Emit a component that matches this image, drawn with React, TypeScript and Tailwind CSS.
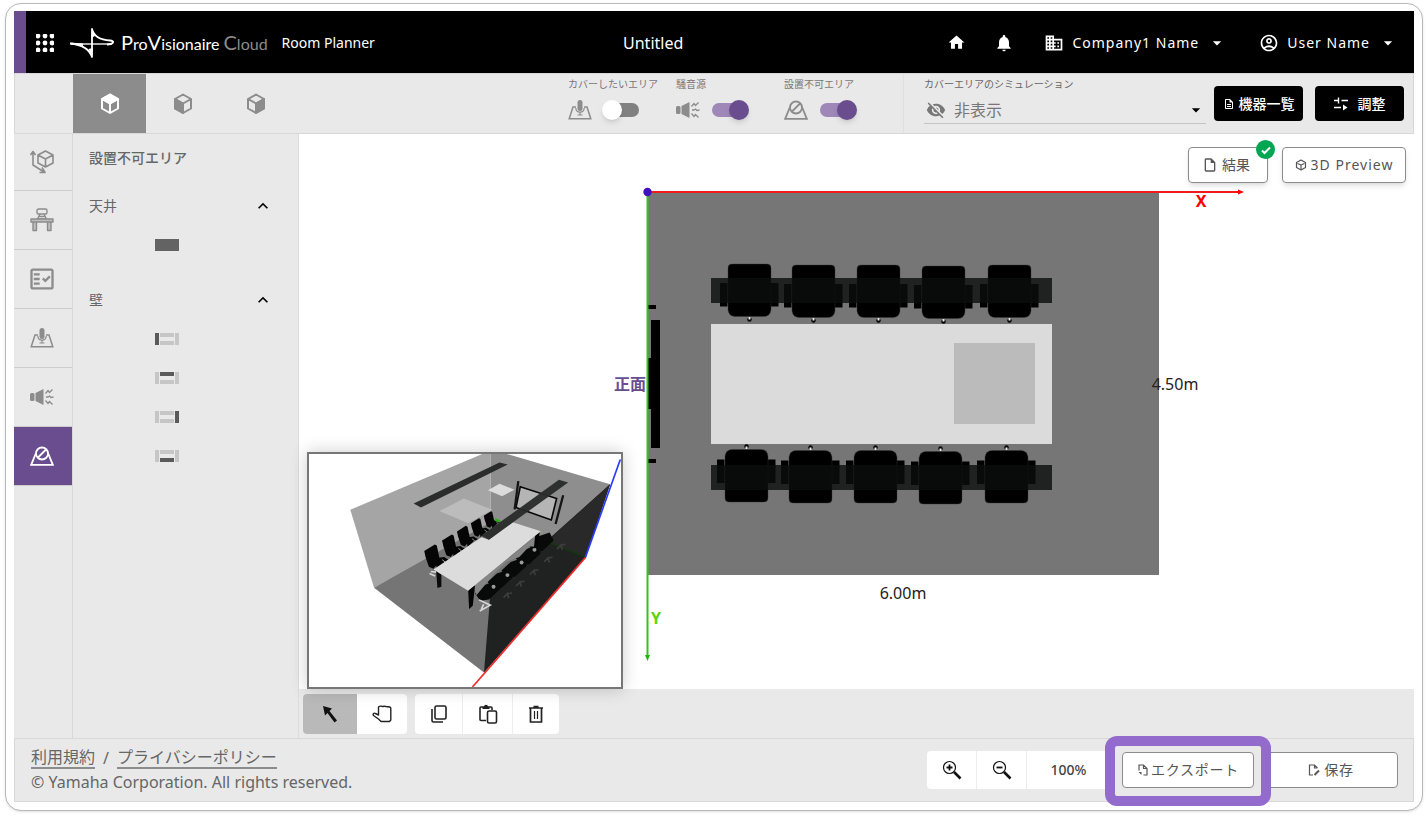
import React, { useState } from 'react';
import {
  MdArrowDropDown,
  MdDomain,
  MdExpandLess,
  MdHome,
  MdNotifications,
  MdOutlineAccountCircle,
  MdOutlineDescription,
  MdOutlineFactCheck,
  MdOutlineInsertDriveFile,
  MdVisibilityOff,
} from 'react-icons/md';

type IconProps = { className?: string };

const AppsIcon = () => (
  <svg viewBox="0 0 18 18" className="h-[18px] w-[18px]" fill="currentColor">
    {[2, 9, 16].map((y) => [2, 9, 16].map((x) => <circle key={`${x}-${y}`} cx={x} cy={y} r="2.4" />))}
  </svg>
);

const LogoMark = () => (
  <svg viewBox="0 0 46 32" className="h-8 w-[46px]" fill="none">
    <path d="M2 17 H43" stroke="#aaa" strokeWidth="2" />
    <path d="M1 16.500 C12 17.500 20 21 23 30 V2 C25 10 32 13 41 13.500 C46 14 45 17 38 17.500" stroke="#fff" strokeWidth="1.800" strokeLinejoin="round" />
    <path d="M23 2 L22.300 11 L26 9 Z M23 30 L23.700 21 L19.500 22 Z M1 15.500 L14 16.500 L14 19 Z" fill="#fff" />
  </svg>
);

// face: which side of the cube is filled
const CubeIcon = ({ face }: { face: 'top' | 'left' | 'right' }) => (
  <svg viewBox="0 0 20 22" className="h-[22px] w-5" stroke="currentColor" strokeWidth="2" strokeLinejoin="round" fill="none">
    <path d="M10 1.500 L18 6 V15.500 L10 20 L2 15.500 V6 Z M2 6 L10 10.500 L18 6 M10 10.500 V20" />
    {face === 'top' && <path d="M10 1.500 L18 6 L10 10.500 L2 6 Z" fill="currentColor" />}
    {face === 'left' && <path d="M2 6 L10 10.500 V20 L2 15.500 Z" fill="currentColor" />}
    {face === 'right' && <path d="M18 6 L10 10.500 V20 L18 15.500 Z" fill="currentColor" />}
  </svg>
);

const MicAreaIcon = ({ className }: IconProps) => (
  <svg viewBox="0 0 24 20" className={className} fill="none" stroke="currentColor" strokeWidth="1.500">
    <path d="M8 7 H5 L1.200 18.800 H22.800 L19 7 H16" />
    <rect x="9.500" y="0" width="5" height="11" rx="2.500" fill="currentColor" stroke="none" />
    <path d="M7.800 8 C8 13.500 16 13.500 16.200 8 M12 11.500 V15 M9.500 15 H14.500" strokeWidth="1.200" />
  </svg>
);

const NoiseIcon = ({ className }: IconProps) => (
  <svg viewBox="0 0 24 20" className={className} fill="currentColor">
    <rect x="0" y="6" width="4.500" height="8" rx="1.500" />
    <path d="M5.500 6 L13.500 2 V18 L5.500 14 Z" />
    <path d="M15.500 6.500 L18 3.500 L19.500 5.500 L22.500 2.500 M16 10 H18 L19.500 9 L21 10.500 L23.500 10 M15.500 13.500 L18 16.500 L19.500 14.500 L22.500 17.500" fill="none" stroke="currentColor" strokeWidth="1.300" />
  </svg>
);

const NoPlaceIcon = ({ className }: IconProps) => (
  <svg viewBox="0 0 24 20" className={className} fill="none" stroke="currentColor" strokeWidth="1.800">
    <path d="M6 7 L1.200 18.800 H22.800 L18 7" />
    <circle cx="12" cy="7.500" r="6" />
    <path d="M8 11.500 L16 3.500" />
  </svg>
);

const RoomSizeIcon = () => (
  <svg viewBox="0 0 24 24" className="h-6 w-6" fill="none" stroke="currentColor" strokeWidth="1.600" strokeLinejoin="round">
    <path d="M15.500 1 L23 5 V13 L15.500 17 L8 13 V5 Z M8 5 L15.500 9 L23 5 M15.500 9 V17" />
    <path d="M3 2 V15 L14 22 M0.500 5 L3 1.500 L5.500 5 M12 17.500 L15 22.500 L9.500 22.500" />
  </svg>
);

const DeskIcon = () => (
  <svg viewBox="0 0 24 24" className="h-6 w-6" fill="none" stroke="currentColor" strokeWidth="1.400" strokeLinejoin="round">
    <rect x="7" y="1" width="10" height="5" rx="1.500" />
    <path d="M10 6 L7.500 11 H16.500 L14 6 M9 8.500 H15" />
    <path d="M1 11 H23 V14 H1 Z M3 14 V22.500 H6.500 V14 M17.500 14 V22.500 H21 V14" fill="#bdbdbd" />
  </svg>
);

const TuneIcon = () => (
  <svg viewBox="0 0 14 14" className="h-3.5 w-3.5" fill="none" stroke="currentColor" strokeWidth="1.400">
    <path d="M0 3.500 H5 M4.500 0.500 V6.500 M7.500 3.500 H14 M0 10.500 H7" />
    <path d="M9 7.500 L13.500 10.500 L9 13.500 Z" fill="currentColor" stroke="none" />
  </svg>
);

const BoxIcon = () => (
  <svg viewBox="0 0 12 12" className="h-3 w-3" fill="none" stroke="currentColor" strokeWidth="1.200" strokeLinejoin="round">
    <path d="M6 1 L10.500 3.500 V8.500 L6 11 L1.500 8.500 V3.500 Z M2.500 4.500 L6 6 L9.500 4.500 M6 6 V10" />
  </svg>
);

const DoneIcon = () => (
  <svg viewBox="0 0 12 12" className="h-3 w-3" fill="none" stroke="currentColor" strokeWidth="2">
    <path d="M2 6.500 L4.500 9 L10 3.500" />
  </svg>
);

const CursorIcon = () => (
  <svg viewBox="0 0 18 20" className="h-5 w-[18px]">
    <path d="M2 2 L11 4.500 L8.500 7 L16 16.500 L13.500 18.500 L6.500 9 L4 11.500 Z" fill="#111" />
  </svg>
);

const HandIcon = () => (
  <svg viewBox="0 0 20 20" className="h-5 w-5" fill="none" stroke="#222" strokeWidth="1.400" strokeLinejoin="round">
    <path d="M6.500 3 C8 1.500 9.500 2 11 2.500 C12.500 1.800 14 2.500 15 2.800 C17 2.500 18.800 3 18.800 4.500 V16 L17.500 17.500 H9 L6.500 15 L1.500 11.500 C0.500 10 2 8.500 3.500 9.500 L6.500 11 Z" />
  </svg>
);

const CopyIcon = () => (
  <svg viewBox="0 0 20 20" className="h-5 w-5" fill="none" stroke="#222" strokeWidth="1.600">
    <rect x="6" y="2" width="11" height="13" rx="1.500" />
    <path d="M3 5 V16.500 Q3 18 4.500 18 H14" />
  </svg>
);

const PasteIcon = () => (
  <svg viewBox="0 0 20 20" className="h-5 w-5" fill="none" stroke="#222" strokeWidth="1.600">
    <path d="M8 16.500 H3 Q2 16.500 2 15.500 V4 Q2 3 3 3 H13 Q14 3 14 4 V6" />
    <rect x="9.500" y="7" width="9" height="12" rx="1.500" />
    <path d="M4.500 5 V3 H6 C6 0 10 0 10 3 H11.500 V5 Z" fill="#222" stroke="none" />
  </svg>
);

const TrashIcon = () => (
  <svg viewBox="0 0 20 20" className="h-5 w-5" fill="none" stroke="#222" strokeWidth="1.700">
    <path d="M3 4 H17 M7.500 2.500 H12.500 M4.500 4 V18 H15.500 V4" />
    <path d="M8.500 7 V15 M11.500 7 V15" strokeWidth="1.200" />
  </svg>
);

const ZoomIcon = ({ plus }: { plus?: boolean }) => (
  <svg viewBox="0 0 20 20" className="h-5 w-5" fill="none" stroke="#111">
    <circle cx="7.500" cy="7.500" r="6" strokeWidth="1.200" />
    <path d={plus ? 'M4.500 7.500 H10.500 M7.500 4.500 V10.500' : 'M4.500 7.500 H10.500'} strokeWidth="1.800" />
    <path d="M12 12 L18.500 18.500" strokeWidth="2.600" />
  </svg>
);

const ExportIcon = () => (
  <svg viewBox="0 0 12 12" className="h-3 w-3" fill="none" stroke="currentColor" strokeWidth="1.200">
    <path d="M2 6.500 V1 H6.500 L10 4.500 V11 H6.500 M6.500 1 V4.500 H10" />
    <path d="M1.500 8 H4.500 V11 Z" fill="currentColor" stroke="none" />
  </svg>
);

const SaveIcon = () => (
  <svg viewBox="0 0 12 12" className="h-3 w-3" fill="none" stroke="currentColor" strokeWidth="1.200">
    <path d="M5 11 H1.500 V1 H6.500 L9.500 4 M6.500 1 V4 H9.500" />
    <path d="M6.500 11 L11 6.500" strokeWidth="2" />
  </svg>
);

const Header = () => (
  <header className="flex h-[62px] items-center border-l-12 border-[#6a4d8f] bg-black pt-px pr-4 text-sm text-white">
    <button aria-label="Apps" className="ml-2.5 mr-[15px]"><AppsIcon /></button>
    <LogoMark />
    <div className="ml-1.5 flex items-baseline font-['Lato',sans-serif] text-base leading-6">
      <span className="text-xl leading-6">P</span>ro<span className="text-xl leading-6">V</span>isionaire
      <span className="ml-1 text-[#8c8c8c]"><span className="text-xl leading-6">C</span>loud</span>
    </div>
    <span className="ml-3.5">Room Planner</span>
    <h1 className="flex-1 pr-4 text-center text-base">Untitled</h1>
    <nav className="flex items-center">
      <button aria-label="Home" className="mr-7"><MdHome className="h-[19px] w-[19px]" /></button>
      <button aria-label="Notifications" className="mr-[30px]"><MdNotifications className="h-5 w-5" /></button>
      <button className="mr-8 flex items-center tracking-[1px]">
        <MdDomain className="mr-2 h-5 w-5" />Company1 Name<MdArrowDropDown className="ml-2 h-5 w-5" />
      </button>
      <button className="flex items-center tracking-[1px]">
        <MdOutlineAccountCircle className="mr-2 h-5 w-5" />User Name<MdArrowDropDown className="ml-2 h-5 w-5" />
      </button>
    </nav>
  </header>
);

const areaToggles = [
  { label: 'カバーしたいエリア', Icon: MicAreaIcon, on: false },
  { label: '騒音源', Icon: NoiseIcon, on: true },
  { label: '設置不可エリア', Icon: NoPlaceIcon, on: true },
];

const Toolbar = () => (
  <div className="flex h-[61px] border border-[#d8d8d8] bg-[#e9e9e9] pl-[58px]">
    {(['top', 'left', 'right'] as const).map((face) => (
      <button
        key={face}
        aria-label={`View ${face}`}
        className={`flex w-[73px] items-center justify-center ${face === 'top' ? 'bg-[#8c8c8c] text-white' : 'text-[#8c8c8c]'}`}
      >
        <CubeIcon face={face} />
      </button>
    ))}
    <div className="ml-auto flex border-r border-[#dfdfdf] pr-[11px]">
      {areaToggles.map(({ label, Icon, on }) => (
        <label key={label} className="flex w-27 flex-col whitespace-nowrap pt-0.5 text-[10px] leading-4 text-[#777]">
          {label}
          <span className="mt-2 flex items-center">
            <Icon className="mr-3 h-5 w-6 text-[#8c8c8c]" />
            <input type="checkbox" defaultChecked={on} className="peer sr-only" />
            <span className="flex h-3.5 w-[35px] items-center rounded-full bg-[#808080] peer-checked:justify-end peer-checked:bg-[#9f87b8] peer-checked:[&>i]:bg-[#6a4d8f]">
              <i className="-mx-0.5 h-5 w-5 rounded-full bg-white shadow-md" />
            </span>
          </span>
        </label>
      ))}
    </div>
    <div className="flex w-[310px] flex-col pl-5 pr-2 pt-0.5">
      <label htmlFor="simulation" className="text-[10px] leading-4 text-[#666]">カバーエリアのシミュレーション</label>
      <div className="mt-1 flex h-7 items-center border-b border-[#c4c4c4] text-[#777]">
        <MdVisibilityOff className="ml-0.5 h-5 w-5" />
        <select id="simulation" className="h-7 flex-1 appearance-none bg-transparent pl-2 text-base leading-7">
          <option>非表示</option>
        </select>
        <MdArrowDropDown className="-ml-5 h-5 w-5 text-black" />
      </div>
    </div>
    <div className="flex gap-3 pr-[9px] pt-3 text-sm font-medium text-white">
      <button className="flex h-[35px] w-[89px] items-center justify-center gap-1 rounded bg-black">
        <MdOutlineDescription className="h-3 w-3" />機器一覧
      </button>
      <button className="flex h-[35px] w-[89px] items-center justify-center gap-2.5 rounded bg-black">
        <TuneIcon />調整
      </button>
    </div>
  </div>
);

const railItems = [
  { label: 'Room size', icon: <RoomSizeIcon /> },
  { label: 'Furniture', icon: <DeskIcon /> },
  { label: 'Requirements', icon: <MdOutlineFactCheck className="h-7 w-7" /> },
  { label: 'Cover area', icon: <MicAreaIcon className="h-5 w-6" /> },
  { label: 'Noise source', icon: <NoiseIcon className="h-5 w-6" /> },
  { label: 'Restricted area', icon: <NoPlaceIcon className="h-5 w-6" /> },
];

const Rail = () => (
  <nav className="w-[59px] border-r border-[#d8d8d8]">
    {railItems.map((item, i) => (
      <button
        key={item.label}
        aria-label={item.label}
        className={`flex w-full items-center justify-center border-b border-[#cdcdcd] pr-0.5 ${
          i === 0 ? 'h-[57px]' : 'h-[59px]'
        } ${i === 5 ? 'bg-[#6a4d8f] text-white' : 'text-[#8c8c8c]'}`}
      >
        {item.icon}
      </button>
    ))}
  </nav>
);

const WallIcon = ({ side }: { side: string }) => {
  const fill = (s: string) => (s === side ? '#5a5a5a' : '#c6c6c6');
  return (
    <svg viewBox="0 0 24 12" className="h-3 w-6">
      <rect x="0" y="0" width="4" height="12" fill={fill('left')} />
      <rect x="5" y="0" width="14" height="4" fill={fill('top')} />
      <rect x="20" y="0" width="4" height="12" fill={fill('right')} />
      <rect x="5" y="8" width="14" height="4" fill={fill('bottom')} />
    </svg>
  );
};

const Section = ({ title, children }: { title: string; children: React.ReactNode }) => {
  const [open, setOpen] = useState(true);
  return (
    <section className="pb-4">
      <button onClick={() => setOpen(!open)} className="flex h-[39px] w-full items-center justify-between">
        {title}
        <MdExpandLess className={`h-5 w-5 text-black ${open ? '' : 'rotate-180'}`} />
      </button>
      {open && <div className="flex flex-col items-center pr-7">{children}</div>}
    </section>
  );
};

const Panel = () => (
  <aside className="w-[226px] border-r border-[#dcdcdc] pl-4 pr-[25px] pt-3 text-sm text-[#666]">
    <h2 className="mb-4 leading-6 font-medium">設置不可エリア</h2>
    <Section title="天井">
      <button aria-label="Ceiling" className="flex h-[39px] items-center"><span className="h-3 w-6 bg-[#636363]" /></button>
    </Section>
    <Section title="壁">
      {['left', 'top', 'right', 'bottom'].map((side) => (
        <button key={side} aria-label={`Wall ${side}`} className="flex h-[39px] items-center"><WallIcon side={side} /></button>
      ))}
    </Section>
  </aside>
);

const topChairs = [[749, 264], [813, 265], [878, 265], [943, 266], [1009, 265]];
const bottomChairs = [[746, 449], [810, 450], [875, 450], [940, 451], [1006, 450]];

const Chair = ({ x, y, flip }: { x: number; y: number; flip?: boolean }) => (
  <g transform={flip ? `translate(${x} ${y + 53}) scale(1 -1)` : `translate(${x} ${y})`}>
    <rect x="-29" y="19" width="7.500" height="23.500" />
    <rect x="22" y="19" width="7.500" height="23.500" />
    <path d="M-17 0 H18 Q22 0 22 4 V46 Q21 52.500 15 52.500 H-14 Q-20 52.500 -21 46 V4 Q-21 0 -17 0 Z" stroke="#3a3a3a" strokeWidth="0.400" />
    <circle cx="0.500" cy="55.500" r="2.200" />
    <rect x="-0.500" y="53" width="2" height="2.500" fill="#eee" />
  </g>
);

const FloorPlan = () => (
  <svg viewBox="299 134 1115 555" className="block h-auto w-full text-base" fill="#000">
    <rect x="648" y="192" width="511" height="383" fill="#767676" />
    <rect x="648" y="305" width="8" height="4" />
    <rect x="648" y="459" width="8" height="4" />
    <rect x="651" y="320" width="9" height="128" />
    <rect x="647" y="358" width="6" height="51" />
    {topChairs.map(([x, y]) => <Chair key={x} x={x} y={y} />)}
    {bottomChairs.map(([x, y]) => <Chair key={x} x={x} y={y} flip />)}
    <g fill="#0b0e0d" opacity="0.800">
      <rect x="711" y="278" width="341" height="25" />
      <rect x="711" y="465" width="341" height="25" />
    </g>
    <rect x="711" y="324" width="341" height="120" fill="#dbdbdb" />
    <rect x="954" y="343" width="81" height="81" fill="#bbb" />
    <path d="M648 192 H1238" stroke="#ee1c1c" strokeWidth="1.800" />
    <path d="M1238 189.500 L1244 192 L1238 194.500 Z" fill="#f00" />
    <path d="M647.500 192 V656" stroke="#36c21e" strokeWidth="2" />
    <path d="M645 655 L647.500 661 L650 655 Z" fill="#1fb50f" />
    <circle cx="647.500" cy="192" r="4.200" fill="#3f0fc4" />
    <text x="1201" y="207" textAnchor="middle" className="font-bold" fill="#f00">X</text>
    <text x="656" y="624" textAnchor="middle" className="font-bold" fill="#5bd60d">Y</text>
    <text x="614" y="390" className="font-bold" fill="#6a4d8f">正面</text>
    <text x="1175" y="390" textAnchor="middle" fill="#222">4.50m</text>
    <text x="903" y="599" textAnchor="middle" fill="#222">6.00m</text>
  </svg>
);

const farChairs = [[398, 348], [450, 315], [493, 286], [533, 260], [570, 236]];
const nearChairs = [[560, 465], [598, 430], [640, 395], [683, 357], [722, 318]];

const RoomPreview = () => (
  <svg viewBox="24 38 943 706" className="block h-full w-full">
    <path d="M148 207 L548 38 H573 V262 L220 443 Z" fill="#a5a5a5" />
    <path d="M573 38 H622 L935 130 L860 352 L573 245 Z" fill="#8e8e8e" />
    <path d="M220 443 L573 245 L860 352 L553 700 Z" fill="#757575" />
    <path d="M418 211 L492 173 L578 207 L505 248 Z" fill="#bcbcbc" />
    <path d="M565 148 L600 128 L645 146 L608 166 Z" fill="#dcdcdc" />
    <path d="M340 188 L600 64 L625 70 L362 200 Z" fill="#2b2d2c" />
    <path d="M663 137 L773 173 L757 238 L650 200 Z" fill="#b5b5b5" stroke="#080808" strokeWidth="5" />
    <path d="M657 120 L646 206 M793 163 L770 250" stroke="#151515" strokeWidth="7" />
    <path d="M935 130 L750 295 L572 440 L570 490 L553 700 L860 352 Z" fill="#202221" />
    <path d="M935 130 L770 278 L752 308 L860 352 Z" fill="#292929" />
    <path d="M718 288 L742 300" stroke="#37c520" strokeWidth="8" />
    <path d="M745 304 L860 350" stroke="#12380e" strokeWidth="4" />
    {farChairs.map(([x, y], i) => {
      const s = 1 - i * 0.08;
      return (
        <g key={x} transform={`translate(${x} ${y}) scale(${s})`}>
          <path d="M-26 -16 L6 -36 L12 -33 L22 14 L2 38 L-12 32 L-22 2 Z M8 6 L34 2 L50 12 L36 18 L12 40 Z" fill="#050505" />
          <path d="M28 10 L38 18" stroke="#aaa" strokeWidth="3" />
        </g>
      );
    })}
    <path d="M586 236 L602 243" stroke="#2fae1b" strokeWidth="8" />
    <path d="M388 400 L405 408 M392 394 L410 396" stroke="#d5d5d5" strokeWidth="5" />
    <path d="M408 392 L424 404 V440 L412 444 Z" fill="#0a0a0a" />
    {nearChairs.map(([x, y], i) => (
      <g key={x}>
        <path d={`M${x - 34} ${y - 4} L${x - 6} ${y - 30} L${x + 30} ${y - 42} L${x + 42} ${y - 18} L${x + 8} ${y + 14} L${x - 18} ${y + 18} Z`} fill="#080909" />
        <path d={`M${x + 52} ${y + 8} l12 -12 l4 14 M${x + 64} ${y - 4} l14 -2`} stroke="#3c3e3d" strokeWidth="5" fill="none" />
        {i > 0 && <circle cx={x - 16} cy={y + 10} r="6" fill="#9b9b9b" />}
      </g>
    ))}
    <path d="M522 438 L718 282 L708 318 L690 318 L660 350 L620 365 L585 400 L530 466 Z" fill="#858585" />
    <path d="M708 285 L722 275 L716 315 L704 325 Z" fill="#050505" />
    <path d="M505 448 L526 436 L519 498 L508 508 Z" fill="#050505" />
    <path d="M538 480 L572 496 L540 514 M552 494 L545 508" stroke="#d8d8d8" strokeWidth="5" fill="none" />
    <path d="M400 388 L545 290 L568 298 L640 245 L725 272 L505 452 Z" fill="#dcdcdc" />
    <path d="M780 116 L808 124 L568 298 L545 286 Z" fill="#292b2a" opacity="0.950" />
    <path d="M860 352 L518 744" stroke="#f02a2a" strokeWidth="5" />
    <path d="M966 55 L860 352" stroke="#2a39ff" strokeWidth="5" />
  </svg>
);

const outlined = 'flex items-center justify-center rounded border border-[#8c8c8c] bg-white text-sm text-[#555]';

const Canvas = () => (
  <div className="relative bg-white">
    <FloorPlan />
    <div className="absolute top-[13px] right-2 flex gap-3.5 text-sm">
      <button className={`${outlined} relative h-9 w-20 gap-1 pr-1 shadow-md`}>
        <MdOutlineInsertDriveFile className="h-4 w-4" />結果
        <span className="absolute -top-2 -right-2 flex h-[19px] w-[19px] items-center justify-center rounded-full bg-[#00a651] text-white">
          <DoneIcon />
        </span>
      </button>
      <button className={`${outlined} h-9 w-[124px] gap-1 tracking-[1px] shadow-md`}>
        <BoxIcon />3D Preview
      </button>
    </div>
    <div className="absolute bottom-0 left-2 h-[237px] w-[316px] border-2 border-[#777] bg-white shadow-[0_0_16px_rgba(0,0,0,0.2)]">
      <RoomPreview />
    </div>
  </div>
);

const EditBar = () => (
  <div className="flex h-[49px] items-center gap-2 pl-1">
    <div className="flex h-10 overflow-hidden rounded bg-white">
      <button aria-label="Select" className="flex w-[54px] items-center justify-center bg-[#b9b9b9]"><CursorIcon /></button>
      <button aria-label="Pan" className="flex w-[50px] items-center justify-center"><HandIcon /></button>
    </div>
    <div className="flex h-10 divide-x divide-[#ededed] rounded bg-white">
      <button aria-label="Copy" className="flex w-[48px] items-center justify-center"><CopyIcon /></button>
      <button aria-label="Paste" className="flex w-[50px] items-center justify-center"><PasteIcon /></button>
      <button aria-label="Delete" className="flex w-[46px] items-center justify-center"><TrashIcon /></button>
    </div>
  </div>
);

const Footer = () => (
  <footer className="flex h-16 items-center border border-[#d8d8d8] bg-[#e9e9e9] pl-4 pr-[15px] text-[#666]">
    <div className="text-base leading-6">
      <div className="flex items-center">
        <a href="#terms" className="border-b-2 border-[#8c8c8c] leading-5">利用規約</a>
        <span className="mx-2">/</span>
        <a href="#privacy" className="border-b-2 border-[#8c8c8c] leading-5">プライバシーポリシー</a>
      </div>
      <p>© Yamaha Corporation. All rights reserved.</p>
    </div>
    <div className="ml-auto flex h-[38px] divide-x divide-[#ededed] rounded-l bg-white">
      <button aria-label="Zoom in" className="flex w-[50px] items-center justify-center"><ZoomIcon plus /></button>
      <button aria-label="Zoom out" className="flex w-[50px] items-center justify-center"><ZoomIcon /></button>
      <span className="flex w-[83px] items-center justify-center text-sm font-medium text-[#444]">100%</span>
    </div>
    <div className="relative ml-3">
      <button className={`${outlined} h-9 w-[132px] gap-0.5 tracking-wider`}><ExportIcon />エクスポート</button>
      <div className="pointer-events-none absolute -inset-x-[17px] -top-4 -bottom-[18px] z-10 rounded-xl border-10 border-[#926bcd]" />
    </div>
    <button className={`${outlined} ml-2.5 h-9 w-[134px] gap-1 tracking-wider`}><SaveIcon />保存</button>
  </footer>
);

const App: React.FC = () => (
  <div className="min-h-screen bg-white px-[5px] pt-[3px] pb-1.5 font-['Noto_Sans','Noto_Sans_CJK_JP',sans-serif]">
    <div className="rounded-2xl border border-[#b9b9b9] bg-white px-2 pt-[7px] pb-2 shadow-sm">
      <Header />
      <Toolbar />
      <main className="flex bg-[#e9e9e9]">
        <Rail />
        <Panel />
        <div className="min-w-0 flex-1">
          <Canvas />
          <EditBar />
        </div>
      </main>
      <Footer />
    </div>
  </div>
);

export default App;
